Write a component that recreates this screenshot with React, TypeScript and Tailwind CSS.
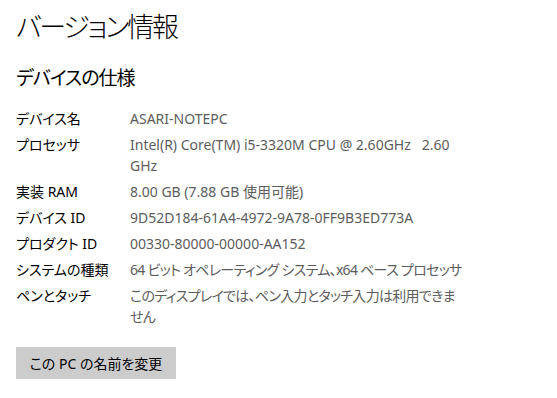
const specs: { label: string; lines: string[]; tight?: boolean }[] = [
  { label: "デバイス名", lines: ["ASARI-NOTEPC"] },
  { label: "プロセッサ", lines: ["Intel(R) Core(TM) i5-3320M CPU @ 2.60GHz\u00a0\u00a0\u00a02.60", "GHz"] },
  { label: "実装 RAM", lines: ["8.00 GB (7.88 GB 使用可能)"] },
  { label: "デバイス ID", lines: ["9D52D184-61A4-4972-9A78-0FF9B3ED773A"] },
  { label: "プロダクト ID", lines: ["00330-80000-00000-AA152"] },
  { label: "システムの種類", lines: ["64 ビット オペレーティング システム、x64 ベース プロセッサ"], tight: true },
  { label: "ペンとタッチ", lines: ["このディスプレイでは、ペン入力とタッチ入力は利用できま", "せん"], tight: true },
]

export default function App() {
  return (
    <div
      className="h-[398px] w-[557px] overflow-hidden bg-white px-4 pt-[9px] text-black [font-feature-settings:'palt']"
      style={{ fontFamily: '"Noto Sans", "Noto Sans CJK JP", sans-serif' }}
    >
      <h1 className="text-[27px] font-light leading-[36px] tracking-[-0.08em]">バージョン情報</h1>

      <h2 className="mt-[20px] text-[19px] leading-[26px] tracking-[-0.05em]">デバイスの仕様</h2>

      <dl className="mt-[17px] space-y-[5px] text-[14px] leading-[21px]">
        {specs.map((item) => (
          <div key={item.label} className="flex">
            <dt className="w-[114px] shrink-0">{item.label}</dt>
            <dd
              className={
                item.tight
                  ? "whitespace-nowrap tracking-[-0.05em] text-[#5d5d5d]"
                  : "whitespace-nowrap text-[#5d5d5d]"
              }
            >
              {item.lines.map((line) => (
                <div key={line}>{line}</div>
              ))}
            </dd>
          </div>
        ))}
      </dl>

      <button
        type="button"
        className="mt-[20px] h-[32px] w-[160px] bg-[#cccccc] text-[14px] text-black"
      >
        この PC の名前を変更
      </button>
    </div>
  )
}
